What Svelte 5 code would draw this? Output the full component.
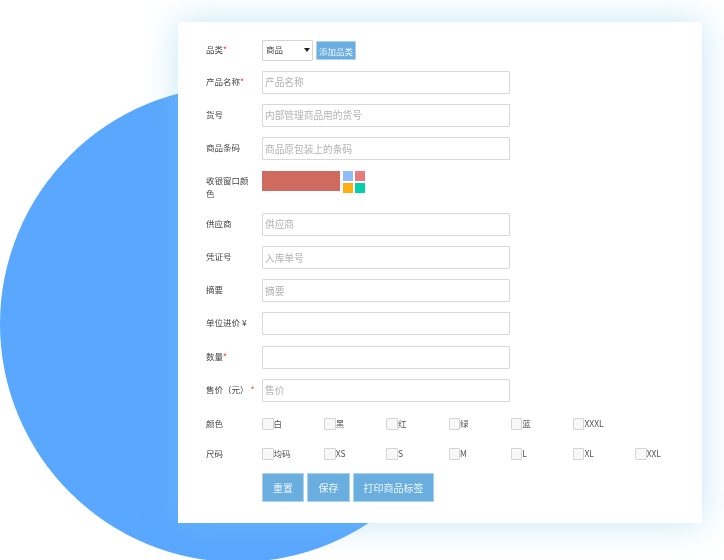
<script>
  const fields = [
    { label: '产品名称', req: true, ph: '产品名称' },
    { label: '货号', ph: '内部管理商品用的货号' },
    { label: '商品条码', ph: '商品原包装上的条码' }
  ]
  const fields2 = [
    { label: '供应商', ph: '供应商' },
    { label: '凭证号', ph: '入库单号' },
    { label: '摘要', ph: '摘要' },
    { label: '单位进价 ¥', ph: '' },
    { label: '数量', req: true, ph: '' },
    { label: '售价（元）', req: true, gap: true, ph: '售价' }
  ]
  const colors = ['白', '黑', '红', '绿', '蓝', 'XXXL']
  const sizes = ['均码', 'XS', 'S', 'M', 'L', 'XL', 'XXL']
  const swatches = ['#8fbbff', '#e87a7c', '#ffae0d', '#05d0ae']
</script>

<div class="page">
  <div class="circle"></div>
  <form class="card">
    <div class="row first">
      <span class="label">品类<i>*</i></span>
      <span class="select"><select><option>商品</option></select></span>
      <button type="button" class="btn add">添加品类</button>
    </div>
    {#each fields as f}
      <div class="row">
        <span class="label">{f.label}{#if f.req}<i>*</i>{/if}</span>
        <input placeholder={f.ph} />
      </div>
    {/each}
    <div class="row color-row">
      <span class="label wrap">收银窗口颜色</span>
      <div class="current"></div>
      <div class="swatches">
        {#each swatches as c}
          <span style="background: {c}"></span>
        {/each}
      </div>
    </div>
    {#each fields2 as f}
      <div class="row">
        <span class="label">{f.label}{#if f.req}<i class:gap={f.gap}>*</i>{/if}</span>
        <input placeholder={f.ph} />
      </div>
    {/each}
    <div class="row checks c1">
      <span class="label">颜色</span>
      <div class="opts">
        {#each colors as c}
          <label><input type="checkbox" />{c}</label>
        {/each}
      </div>
    </div>
    <div class="row checks c2">
      <span class="label">尺码</span>
      <div class="opts">
        {#each sizes as s}
          <label><input type="checkbox" />{s}</label>
        {/each}
      </div>
    </div>
    <div class="actions">
      <button type="button" class="btn reset">重置</button>
      <button type="button" class="btn save">保存</button>
      <button type="button" class="btn print">打印商品标签</button>
    </div>
  </form>
</div>

<style>
  :global(body) {
    background: #fff;
    font-family: "Noto Sans CJK SC", "Liberation Sans", sans-serif;
  }
  .page {
    position: relative;
    width: 724px;
    height: 560px;
    overflow: hidden;
    padding: 22px 0 0 178px;
    box-sizing: border-box;
  }
  .circle {
    position: absolute;
    left: 0;
    top: 86px;
    width: 476px;
    height: 476px;
    border-radius: 50%;
    background: #59a7ff;
  }
  .card {
    position: relative;
    width: 524px;
    height: 501px;
    box-sizing: border-box;
    padding: 17.5px 0 0 28px;
    background: #fff;
    box-shadow: 0 0 32px rgba(120, 200, 235, 0.45);
    color: #444;
    font-size: 8.5px;
  }
  .row,
  .actions {
    filter: blur(0.4px);
  }
  .row {
    display: flex;
    align-items: center;
    height: 23px;
    margin-bottom: 10.2px;
  }
  .first {
    height: 21px;
    margin-bottom: 10.2px;
  }
  .label {
    width: 56px;
    flex: none;
    margin-top: -3px;
  }
  .label i {
    color: #f33;
    font-style: normal;
  }
  .label i.gap {
    margin-left: 2px;
  }
  .wrap {
    width: 44px;
    margin-right: 12px;
    line-height: 13px;
    padding-top: 7px;
  }
  input:not([type='checkbox']) {
    width: 248px;
    height: 23px;
    box-sizing: border-box;
    border: 1px solid #d8d8d8;
    border-radius: 1px;
    padding: 0 2px;
    background: #fff;
    font: inherit;
    font-size: 9.7px;
    outline: none;
  }
  input::placeholder {
    color: #b2b2b2;
  }
  .select {
    position: relative;
    width: 51px;
    height: 21px;
    flex: none;
  }
  .select::after {
    content: '';
    position: absolute;
    left: 42px;
    top: 8px;
    border: 3px solid transparent;
    border-top: 4px solid #222;
    border-bottom: 0;
  }
  select {
    appearance: none;
    display: block;
    width: 100%;
    height: 100%;
    box-sizing: border-box;
    border: 1px solid #d4d4d4;
    border-radius: 1px;
    background: #fff;
    font: inherit;
    color: #444;
    padding: 0 0 2px 3px;
  }
  .btn {
    border: 1px solid #a9d3ee;
    border-radius: 0;
    background: #69aede;
    color: #eef6fb;
    font-family: inherit;
    padding: 0;
  }
  .add {
    width: 40px;
    height: 19px;
    margin: 1px 0 0 3px;
    font-size: 8.5px;
  }
  .color-row {
    align-items: flex-start;
    height: 21px;
    margin-bottom: 21.6px;
  }
  .current {
    width: 78px;
    height: 20px;
    margin-top: 1px;
    background: #cf6a61;
  }
  .swatches {
    display: grid;
    grid-template-columns: 10px 10px;
    grid-auto-rows: 10px;
    gap: 2px;
    margin: 1px 0 0 3px;
  }
  .checks {
    height: 14px;
    margin: 0;
  }
  .checks .label {
    margin-top: -1px;
  }
  .c1 {
    margin-top: 14.6px;
  }
  .c2 {
    margin-top: 16px;
  }
  .opts {
    display: grid;
    grid-template-columns: repeat(7, 62.2px);
  }
  .opts label {
    display: flex;
    align-items: center;
    color: #555;
  }
  .opts input {
    appearance: none;
    width: 11.5px;
    height: 12px;
    margin: 1px 0 0;
    box-sizing: border-box;
    border: 1px solid #d4d4d4;
    border-radius: 1px;
    background: #f8f8f8;
  }
  .actions {
    display: flex;
    gap: 3px;
    margin: 12.5px 0 0 56px;
  }
  .actions .btn {
    height: 29px;
    font-size: 10px;
  }
  .reset { width: 42px; }
  .save { width: 43px; }
  .print { width: 81px; }
</style>
